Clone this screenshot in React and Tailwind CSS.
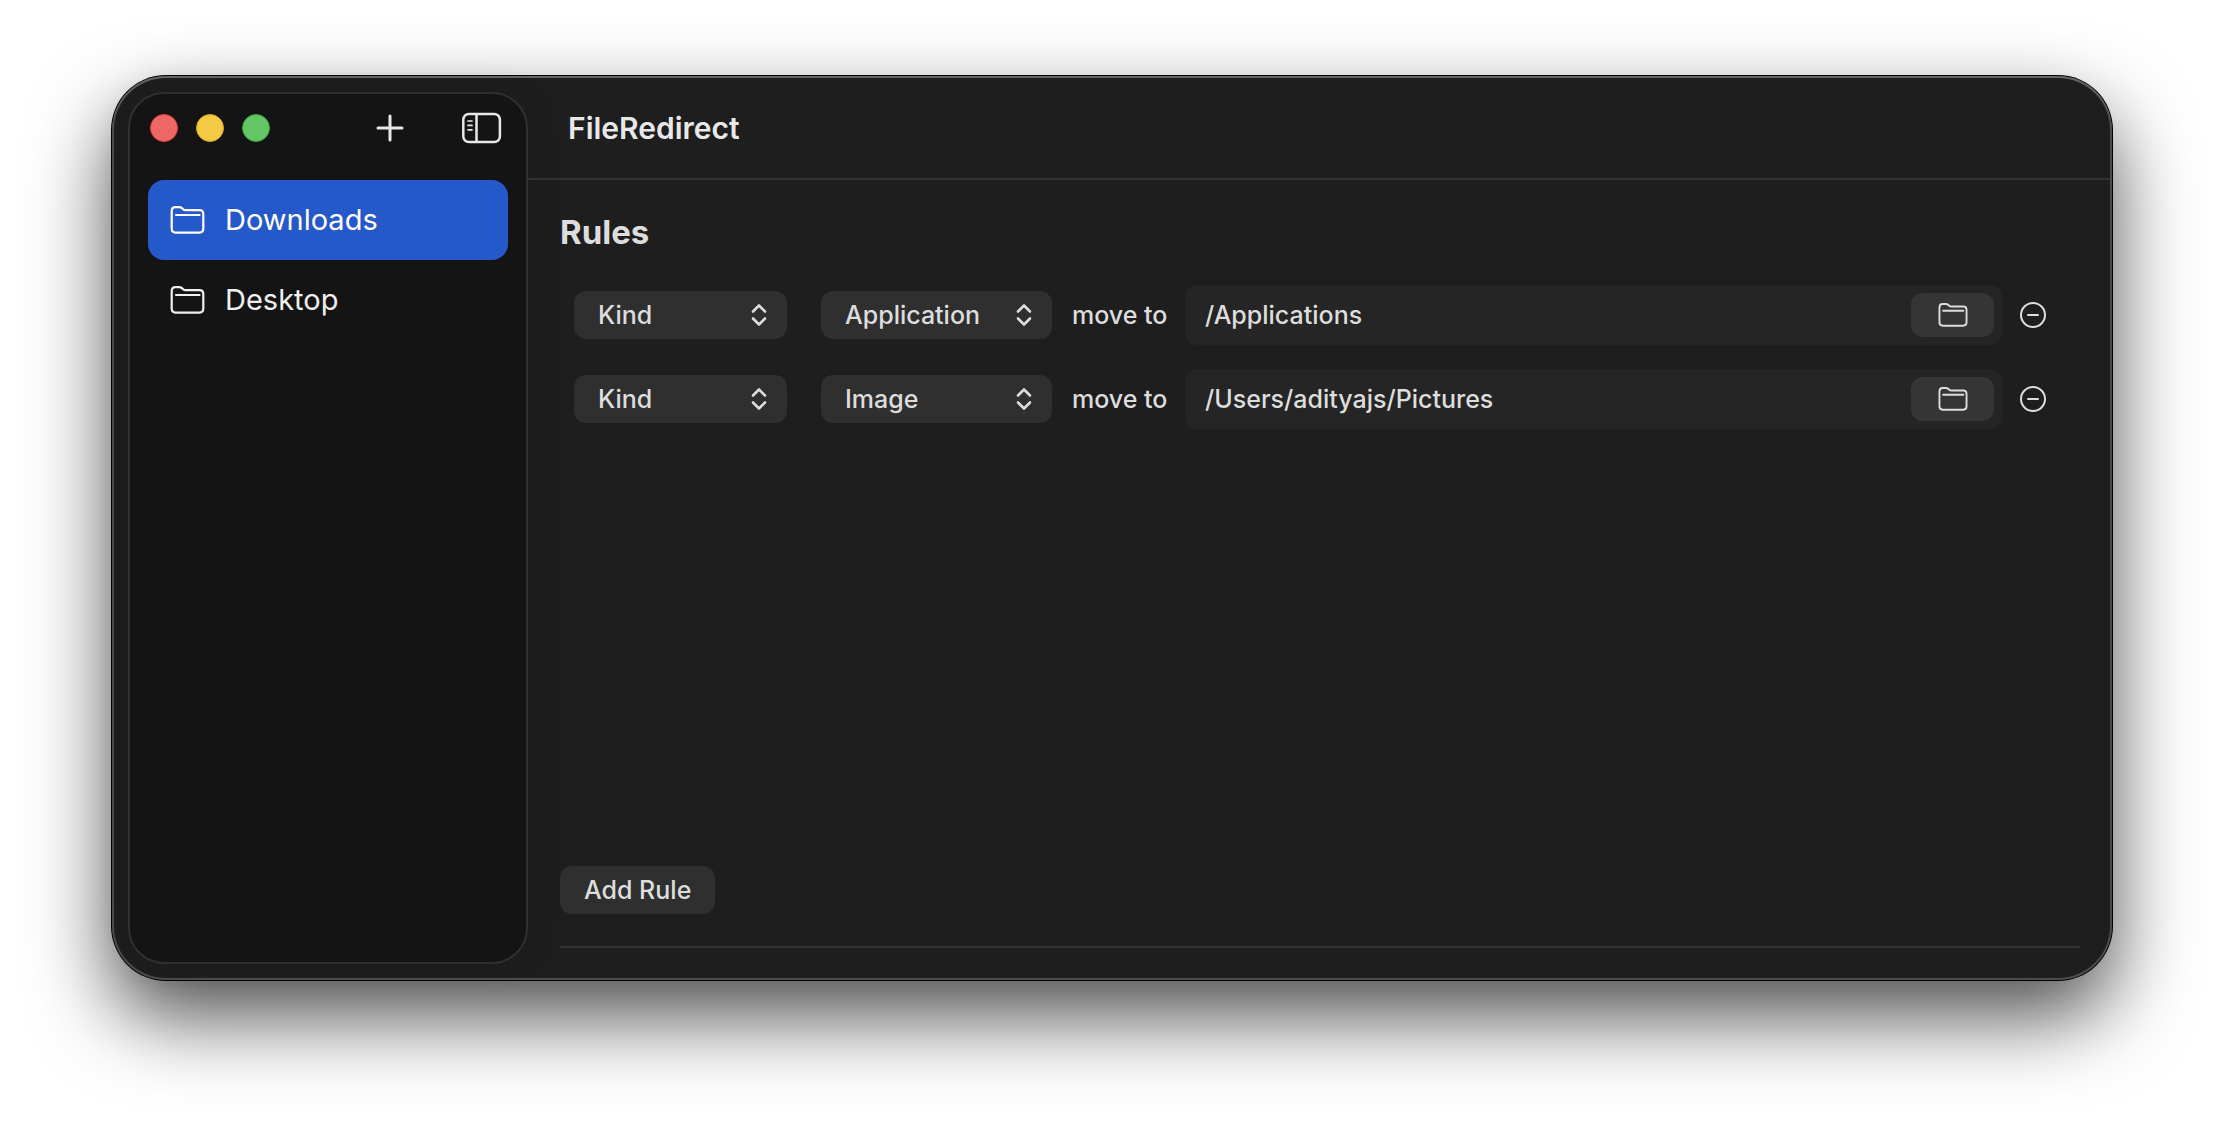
import React, { useState } from 'react';

const FOLDERS = ['Downloads', 'Desktop'];
const FIELDS = ['Kind', 'Name', 'Extension'];
const KINDS = ['Application', 'Image', 'Document', 'Movie', 'Music'];

const INITIAL_RULES = [
  { id: 1, field: 'Kind', value: 'Application', path: '/Applications' },
  { id: 2, field: 'Kind', value: 'Image', path: '/Users/adityajs/Pictures' },
];

const FolderIcon = ({ className }) => (
  <svg viewBox="0 0 34 28" fill="none" stroke="currentColor" strokeWidth="2.2" strokeLinecap="round" strokeLinejoin="round" className={className} aria-hidden="true">
    <path d="M1.2 5.2C1.2 2.5 2.4 1.2 5 1.2h3.4c1.5 0 2.3.3 3.3 1.2l.9.8c.8.7 1.4.9 2.6.9H29c2.6 0 3.8 1.3 3.8 4v14.5c0 2.7-1.2 4-3.8 4H5c-2.6 0-3.8-1.3-3.8-4z" />
    <path d="M5.5 9h23.5" />
  </svg>
);

const SidebarIcon = () => (
  <svg viewBox="0 0 40 32" fill="none" stroke="currentColor" strokeWidth="2.5" strokeLinecap="round" className="h-8 w-10" aria-hidden="true">
    <rect x="1.3" y="2" width="36.6" height="28" rx="5.5" />
    <path d="M14.5 2.5v27" />
    <path d="M6 9h4M6 13.4h4M6 17.8h4" strokeWidth="1.7" />
  </svg>
);

// macOS style pop-up button
const Picker = ({ label, value, options, onChange, className }) => (
  <div className={`relative shrink-0 ${className}`}>
    <select
      aria-label={label}
      value={value}
      onChange={(e) => onChange(e.target.value)}
      className="h-12 w-full appearance-none rounded-xl bg-[#2f2f2f] pl-6 pr-12 leading-8 outline-none"
    >
      {options.map((option) => (
        <option key={option}>{option}</option>
      ))}
    </select>
    <svg viewBox="0 0 16 24" fill="none" stroke="currentColor" strokeWidth="2.6" strokeLinecap="round" strokeLinejoin="round" className="pointer-events-none absolute right-5 top-3 h-6 w-4" aria-hidden="true">
      <path d="M2 8.5l6-6 6 6M2 15.5l6 6 6-6" />
    </svg>
  </div>
);

const RuleRow = ({ rule, onChange, onRemove }) => (
  <li className="flex items-center">
    <Picker label="Match" value={rule.field} options={FIELDS} onChange={(field) => onChange({ ...rule, field })} className="mr-[34px] w-[213px]" />
    <Picker label="Value" value={rule.value} options={KINDS} onChange={(value) => onChange({ ...rule, value })} className="mr-5 w-[231px]" />
    <label htmlFor={`path-${rule.id}`} className="mr-4 w-[97px] shrink-0 whitespace-nowrap">
      move to
    </label>
    <div className="flex h-[60px] min-w-0 flex-1 items-center rounded-xl bg-[#252525] pl-5 pr-2">
      <input
        id={`path-${rule.id}`}
        type="text"
        value={rule.path}
        onChange={(e) => onChange({ ...rule, path: e.target.value })}
        className="min-w-0 flex-1 bg-transparent outline-none"
      />
      <button type="button" aria-label="Choose folder" className="flex h-11 w-[83px] items-center justify-center rounded-xl bg-[#353535]">
        <FolderIcon className="h-6 w-[30px]" />
      </button>
    </div>
    <button type="button" aria-label="Remove rule" onClick={onRemove} className="ml-[18px] shrink-0">
      <svg viewBox="0 0 26 26" fill="none" stroke="currentColor" strokeWidth="2" strokeLinecap="round" className="size-[26px]" aria-hidden="true">
        <circle cx="13" cy="13" r="12" />
        <path d="M8 13h10" />
      </svg>
    </button>
  </li>
);

const Sidebar = ({ selected, onSelect }) => (
  <aside className="m-4 mr-0 w-[400px] shrink-0 rounded-[36px] border-2 border-[#303030] bg-[#141414] px-[18px] shadow-[0_0_32px_rgba(0,0,0,0.15)]">
    <div className="flex h-[86px] items-center pb-[18px] pl-0.5 pr-1.5 text-[#e8e8e8]">
      <div className="flex gap-[18px]">
        <button type="button" aria-label="Close" className="size-7 rounded-full border border-[#e0443e] bg-[#ed6765]"></button>
        <button type="button" aria-label="Minimize" className="size-7 rounded-full border border-[#dba520] bg-[#f4c944]"></button>
        <button type="button" aria-label="Zoom" className="size-7 rounded-full border border-[#38a53a] bg-[#65c466]"></button>
      </div>
      <button type="button" aria-label="Add folder" className="ml-auto mr-[58px]">
        <svg viewBox="0 0 28 28" fill="none" stroke="currentColor" strokeWidth="3" strokeLinecap="round" className="size-7" aria-hidden="true">
          <path d="M14 2v24M2 14h24" />
        </svg>
      </button>
      <button type="button" aria-label="Toggle sidebar">
        <SidebarIcon />
      </button>
    </div>
    <nav>
      {FOLDERS.map((folder) => (
        <button
          key={folder}
          type="button"
          onClick={() => onSelect(folder)}
          className={`flex h-20 w-full items-center gap-5 rounded-2xl pl-[22px] text-[29px] font-normal ${
            folder === selected ? 'bg-[#2558c9] text-white' : 'text-[#f0f0f0]'
          }`}
        >
          <FolderIcon className="h-7 w-[35px]" />
          {folder}
        </button>
      ))}
    </nav>
  </aside>
);

const App = () => {
  const [selected, setSelected] = useState('Downloads');
  const [rules, setRules] = useState(INITIAL_RULES);

  const updateRule = (next) => setRules(rules.map((rule) => (rule.id === next.id ? next : rule)));
  const removeRule = (id) => setRules(rules.filter((rule) => rule.id !== id));
  const addRule = () => setRules([...rules, { id: Date.now(), field: 'Kind', value: 'Application', path: '' }]);

  return (
    <div className="flex min-h-screen bg-white px-28 pb-[148px] pt-[76px] font-['Inter',sans-serif] text-[25px] font-medium leading-8 text-[#dddddd]">
      <div className="flex min-w-0 flex-1 rounded-[54px] bg-[#1e1e1e] shadow-[inset_0_2px_0_rgba(255,255,255,0.15),inset_0_0_0_2px_#4c4c4c,0_0_0_1px_#000,0_36px_82px_rgba(0,0,0,0.7)]">
        <Sidebar selected={selected} onSelect={setSelected} />
        <main className="flex min-w-0 flex-1 flex-col">
          <header className="mr-0.5 flex h-[104px] items-center border-b-2 border-[#323232] pl-10 pt-0.5">
            <h1 className="text-[30px] font-semibold text-[#e8e8e8]">FileRedirect</h1>
          </header>
          <section className="flex flex-1 flex-col pb-8 pl-8 pr-8 pt-8">
            <h2 className="text-[33px] font-bold leading-10">Rules</h2>
            <ul className="mt-[33px] flex flex-col gap-6 pl-[14px] pr-[34px]">
              {rules.map((rule) => (
                <RuleRow key={rule.id} rule={rule} onChange={updateRule} onRemove={() => removeRule(rule.id)} />
              ))}
            </ul>
            <div className="mt-auto border-b-2 border-[#323232] pb-8">
              <button type="button" onClick={addRule} className="block h-12 rounded-xl bg-[#2f2f2f] px-6">
                Add Rule
              </button>
            </div>
          </section>
        </main>
      </div>
    </div>
  );
};

export default App;
